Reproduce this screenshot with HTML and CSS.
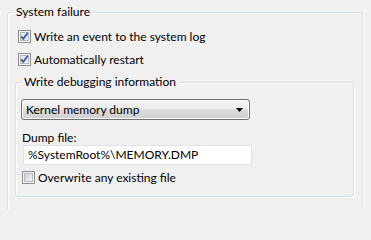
FILE: index.html
```html
<!DOCTYPE html>
<html>
<head>
<meta charset="utf-8">
<link rel="stylesheet" href="styles.css">
</head>
<body>
<div class="page">
<section class="group outer">
  <h2 class="group-title outer-title">System failure</h2>
  <div class="check-row first">
    <svg class="cb" width="13" height="13" viewBox="0 0 13 13"><rect x="0.5" y="0.5" width="12" height="12" fill="#f4f4f4" stroke="#8f8f8f"/><rect x="2.5" y="2.5" width="8" height="8" fill="#e6e8eb" stroke="#b6bcc3"/><path d="M3.2 6.4 L5.2 8.8 L9.8 2.8" fill="none" stroke="#41579a" stroke-width="1.7"/></svg>
    <span>Write an event to the system log</span>
  </div>
  <div class="check-row">
    <svg class="cb" width="13" height="13" viewBox="0 0 13 13"><rect x="0.5" y="0.5" width="12" height="12" fill="#f4f4f4" stroke="#8f8f8f"/><rect x="2.5" y="2.5" width="8" height="8" fill="#e6e8eb" stroke="#b6bcc3"/><path d="M3.2 6.4 L5.2 8.8 L9.8 2.8" fill="none" stroke="#41579a" stroke-width="1.7"/></svg>
    <span>Automatically restart</span>
  </div>
  <section class="group inner">
    <h3 class="group-title inner-title">Write debugging information</h3>
    <div class="combo">
      <span>Kernel memory dump</span>
      <svg class="arrow" width="7" height="4" viewBox="0 0 7 4"><path d="M0 0 H7 L3.5 4 Z" fill="#000"/></svg>
    </div>
    <div class="label">Dump file:</div>
    <div class="field">%SystemRoot%\MEMORY.DMP</div>
    <div class="check-row last">
      <svg class="cb" width="13" height="13" viewBox="0 0 13 13"><defs><linearGradient id="g" x1="0" y1="0" x2="1" y2="1"><stop offset="0" stop-color="#cbcfd5"/><stop offset="1" stop-color="#f7f7f7"/></linearGradient></defs><rect x="0.5" y="0.5" width="12" height="12" fill="#f4f4f4" stroke="#8f8f8f"/><rect x="2.5" y="2.5" width="8" height="8" fill="url(#g)" stroke="#b6bcc3"/></svg>
      <span>Overwrite any existing file</span>
    </div>
  </section>
</section>
</div>
</body>
</html>
```
FILE: styles.css
```css
html, body {
  margin: 0;
  padding: 0;
  background: #f0f0f0;
  height: 209px;
  overflow: hidden;
}
.page {
  height: 209px;
  overflow: hidden;
  padding-top: 12px;
  box-sizing: border-box;
  font-family: "Lato", "Noto Sans", sans-serif;
  font-size: 12px;
  color: #000;
}
.group {
  position: relative;
  border: 1px solid #d5dfe5;
  border-radius: 3px;
  box-shadow: inset 1px 1px 0 #fff, 1px 1px 0 #fff;
  box-sizing: border-box;
}
.outer {
  margin-left: 7px;
  width: 356px;
  height: 240px;
  padding: 15px 0 0 0;
}
.group-title {
  position: absolute;
  top: -9px;
  left: 6px;
  margin: 0;
  padding: 0 2px;
  font-size: 12px;
  font-weight: normal;
  line-height: 16px;
  background: #f0f0f0;
}
.check-row {
  display: flex;
  align-items: center;
  height: 17px;
  gap: 3px;
  margin-left: 10px;
  margin-top: 6px;
  white-space: nowrap;
}
.check-row.first {
  margin-top: 0;
}
.cb {
  flex: none;
  display: block;
}
.inner {
  margin-left: 7px;
  margin-top: 14px;
  width: 339px;
  padding: 16px 0 10px 0;
}
.combo {
  margin-left: 5px;
  width: 229px;
  height: 21px;
  box-sizing: border-box;
  border: 1px solid #707070;
  border-radius: 3px;
  background: linear-gradient(#f2f2f2 0%, #ebebeb 50%, #dddddd 50%, #cfcfcf 100%);
  box-shadow: inset 0 0 0 1px #fcfcfc;
  display: flex;
  align-items: center;
  justify-content: space-between;
  padding: 0 6px 0 4px;
}
.arrow {
  display: block;
}
.label {
  margin: 11px 0 0 6px;
  line-height: 14px;
}
.field {
  margin-left: 7px;
  width: 229px;
  height: 20px;
  box-sizing: border-box;
  border: 1px solid #dfe3e8;
  background: #fff;
  padding: 0 4px;
  line-height: 18px;
}
.check-row.last {
  margin-left: 6px;
  margin-top: 4px;
}
```
